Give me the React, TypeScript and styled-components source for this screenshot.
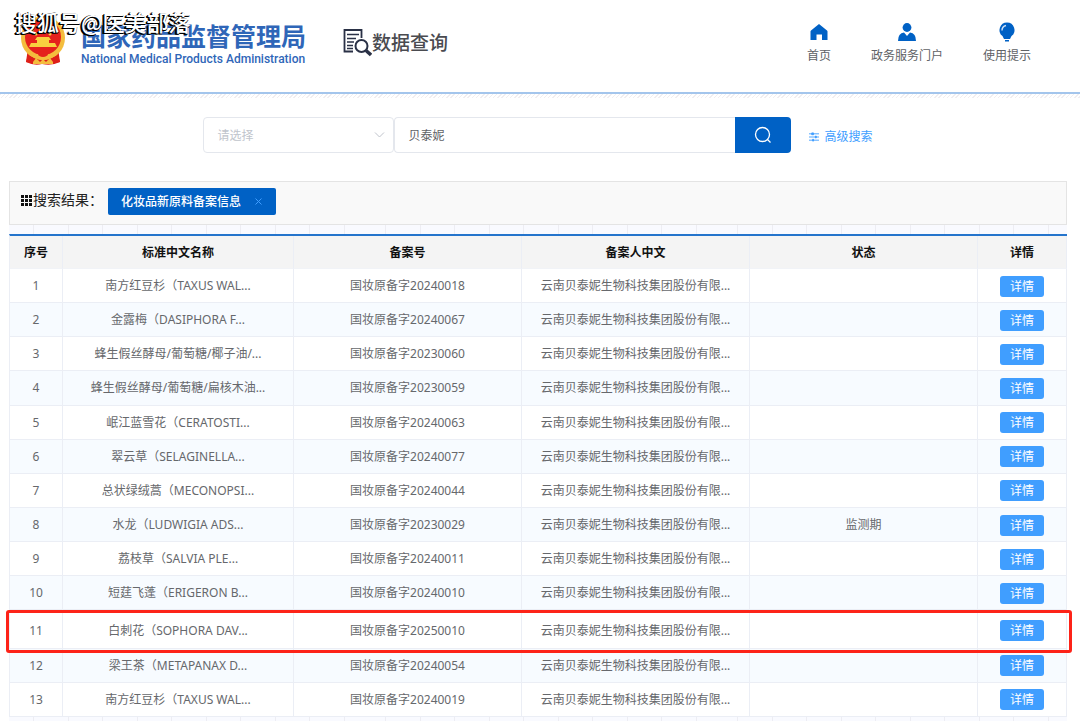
import React from "react";
import styled, { createGlobalStyle } from "styled-components";

const GlobalStyle = createGlobalStyle`
  *, *::before, *::after { box-sizing: border-box; }
  body {
    margin: 0;
    background: #fff;
    color: #66686c;
    font: 12px/18px "Noto Sans", "Noto Sans CJK SC", sans-serif;
  }
  button, input, select { font: inherit; }
`;

const Page = styled.div`
  position: relative;
  overflow-x: hidden;
`;

const Watermark = styled.div`
  position: absolute;
  left: 15px;
  top: 5px;
  z-index: 3;
  color: #fff;
  font: 500 22px/32px "Noto Sans CJK SC", sans-serif;
  white-space: nowrap;
  pointer-events: none;
  text-shadow: -1px 0 0 #000, -1px 1px 0 #000, 0 1px 0 #000, -2px 1px 0 #000;
`;

const Header = styled.header`
  display: flex;
  align-items: flex-start;
  height: 94px;
  padding: 0 49px 0 20px;
  border-bottom: 2px solid #a3c5ec;
`;

const Hatch = styled.div`
  height: 4px;
  background: repeating-linear-gradient(135deg, #f0eef1 0 1px, #fff 1px 3px);
`;

const Brand = styled.div`
  display: flex;
  align-items: flex-start;
  gap: 15px;
  padding-top: 15px;
`;

const BrandText = styled.div`
  display: flex;
  flex-direction: column;
  padding-top: 5px;
  color: #2f66b8;
`;

const BrandName = styled.h1`
  margin: 0;
  font: 700 25px/30px "Noto Sans CJK SC", sans-serif;
`;

const BrandEnglish = styled.span`
  font: 500 12px/18px Roboto, sans-serif;
  white-space: nowrap;
`;

const SiteTitle = styled.h2`
  display: flex;
  align-items: center;
  margin: 26px 0 0 37px;
  color: #4a4b50;
  font: 500 19px/32px "Noto Sans CJK SC", sans-serif;
  white-space: nowrap;
`;

const Nav = styled.nav`
  display: flex;
  gap: 40px;
  margin-left: auto;
  padding-top: 23px;
`;

const NavLink = styled.a`
  display: flex;
  flex-direction: column;
  align-items: center;
  gap: 6px;
  color: #606266;
  text-decoration: none;
  white-space: nowrap;
  svg { fill: #0061c5; }
`;

const Main = styled.main`
  padding: 19px 13px 0 9px;
`;

const SearchForm = styled.form`
  display: flex;
  align-items: center;
  justify-content: center;
`;

const SelectBox = styled.div`
  position: relative;
  width: 191px;
  svg {
    position: absolute;
    right: 9px;
    top: 12px;
    pointer-events: none;
  }
`;

const CategorySelect = styled.select`
  appearance: none;
  display: block;
  width: 100%;
  height: 36px;
  padding: 1px 28px 0 13px;
  border: 1px solid #e4e7ed;
  border-radius: 4px;
  background: #fff;
  color: #c0c4cc;
`;

const Keyword = styled.input`
  width: 341px;
  height: 36px;
  padding: 0 13px;
  border: 1px solid #e4e7ed;
  border-right: 0;
  border-radius: 4px 0 0 4px;
  background: #fff;
  color: #606266;
`;

const SearchButton = styled.button`
  display: flex;
  align-items: center;
  justify-content: center;
  width: 56px;
  height: 36px;
  padding: 0;
  border: 0;
  border-radius: 0 4px 4px 0;
  background: #0061c5;
`;

const AdvancedLink = styled.a`
  display: flex;
  align-items: center;
  gap: 5px;
  margin-left: 18px;
  padding-top: 3px;
  color: #409eff;
  text-decoration: none;
`;

const ResultBar = styled.section`
  display: flex;
  align-items: flex-start;
  height: 44px;
  margin-top: 28px;
  padding: 6px 10px;
  border: 1px solid #e4e4e4;
  background: #f9f9f9;
`;

const ResultLabel = styled.span`
  display: flex;
  align-items: center;
  gap: 1px;
  width: 88px;
  height: 24px;
  padding-left: 1px;
  color: #222;
  font-size: 14px;
  white-space: nowrap;
`;

const Tag = styled.span`
  display: flex;
  align-items: center;
  gap: 12px;
  height: 27px;
  padding: 0 12px 0 13px;
  border-radius: 2px;
  background: #0061c5;
  color: #fff;
  font-weight: 500;
`;

const TagClose = styled.button`
  display: flex;
  padding: 2px;
  border: 0;
  background: none;
`;

const TableArea = styled.div`
  padding: 9px 0 4px;
  background-color: #f9faff;
  background-image: repeating-linear-gradient(90deg, transparent 0 9.5%, #ededf3 9.5% 9.8%);
  background-size: 352px 100%;
  background-position: -9px 0;
`;

const Table = styled.table`
  width: 100%;
  height: 483px;
  table-layout: fixed;
  border-collapse: separate;
  border-spacing: 0;
  border-top: 2px solid #2474cc;
  border-left: 1px solid #ebeef5;
  background: #fff;
  text-align: center;
`;

const Col = styled.col<{ $share: number }>`
  width: ${(p) => (p.$share / 1057) * 100}%;
`;

const HeadCell = styled.th`
  height: 33px;
  padding: 2px 10px 0;
  border-right: 1px solid #ebeef5;
  border-bottom: 1px solid #f1f3f7;
  background: #f4f4f4;
  color: #111;
  font-weight: 700;
`;

const Row = styled.tr<{ $marked: boolean }>`
  position: relative;
  height: ${(p) => (p.$marked ? 38 : 34)}px;
  background: #fff;
  &:nth-child(even) { background: #f7fbff; }
  td { padding-top: ${(p) => (p.$marked ? 4 : 1)}px; }
`;

const Cell = styled.td`
  padding: 0 10px;
  border-right: 1px solid #ebeef5;
  border-bottom: 1px solid #ebeef5;
  white-space: nowrap;
`;

const Marker = styled.div`
  position: absolute;
  z-index: 2;
  inset: 0 -5px -4px -4px;
  border: 3px solid #fd2318;
  border-radius: 3px;
  pointer-events: none;
`;

const DetailButton = styled.button`
  display: block;
  width: 44px;
  height: 21px;
  margin: 0 auto;
  padding: 0;
  border: 0;
  border-radius: 3px;
  background: #409eff;
  color: #fff;
  line-height: 21px;
`;

const Emblem = () => (
  <svg width="46" height="51" viewBox="0 0 46 51" aria-hidden="true">
    <path d="M8 33 L6 47 Q14 51 22 49 Q32 51 40 47 L38 33Z" fill="#de2019" />
    <circle cx="23" cy="23" r="22" fill="#f4bd3d" />
    <circle cx="23" cy="22" r="18" fill="#e5211d" />
    <path d="M23 5l2 5h5l-4 3 2 5-5-3-5 3 2-5-4-3h5z" fill="#f8d03f" />
    <g fill="#f8d03f">
      <circle cx="12" cy="15" r="1.500" />
      <circle cx="34" cy="15" r="1.500" />
      <circle cx="16" cy="19" r="1.500" />
      <circle cx="30" cy="19" r="1.500" />
      <path d="M17 22h12l2 3h-2v3h6l2 4H9l2-4h6v-3h-2z" />
    </g>
    <path d="M6 34q11 9 17 3 6 6 17-3l-3 6q-8 5-14 5T9 40z" fill="#f4bd3d" />
    <path d="M8 40l7 4-3 4-6-1zM38 40l-7 4 3 4 6-1z" fill="#de2019" />
    <ellipse cx="23" cy="39" rx="5" ry="3" fill="#e5211d" />
    <path d="M13 47l3-4 4 4 3-3 3 3 4-4 3 4v2H13z" fill="#f4bd3d" />
  </svg>
);

const QueryIcon = () => (
  <svg width="29" height="29" viewBox="0 0 29 29" fill="none" stroke="#2a3146" aria-hidden="true">
    <path d="M10 23.500H1.500V2H18.500V10" strokeWidth="1.800" />
    <path d="M4 6.500h12M4 10.500h9M4 14h7M4 17.500h6M4 20.500h6" strokeWidth="1.300" />
    <circle cx="18.500" cy="18" r="6" strokeWidth="2" />
    <path d="M23 22.500l5 4.500" strokeWidth="3.500" />
  </svg>
);

const HomeIcon = () => (
  <svg width="18" height="18" viewBox="0 0 18 18" aria-hidden="true">
    <path d="M9 1l8 6.500q.5.500.5 1V17h-5.500v-5.500H6.500V17H.5V8.500q0-.5.5-1z" />
  </svg>
);

const UserIcon = () => (
  <svg width="18" height="18" viewBox="0 0 18 18" aria-hidden="true">
    <circle cx="9" cy="4.500" r="4.400" />
    <path d="M0 18q0-8 6-8.500l3 3.500 3-3.500q6 .5 6 8.500z" />
  </svg>
);

const BulbIcon = () => (
  <svg width="18" height="18" viewBox="0 0 18 18" overflow="visible" aria-hidden="true">
    <path d="M9-.5a7.500 7.500 0 0 1 4.500 13.500L12 16H6l-1.500-3A7.500 7.500 0 0 1 9-.5zM7 17h4v1.500H7z" />
    <path d="M4 7.500q0-4 4-5" style={{ fill: "none" }} stroke="#cfe2f8" strokeWidth="1.400" />
  </svg>
);

const ChevronIcon = () => (
  <svg width="11" height="12" viewBox="0 0 11 12" fill="none" stroke="#c0c4cc" aria-hidden="true">
    <path d="M1 3.500l4.500 4.500L10 3.500" />
  </svg>
);

const SearchIcon = () => (
  <svg width="18" height="18" viewBox="0 0 18 18" fill="none" stroke="#fff" strokeWidth="1.300" aria-hidden="true">
    <circle cx="8.500" cy="8.500" r="7" />
    <path d="M13.500 13.500l3 3" />
  </svg>
);

const SlidersIcon = () => (
  <svg width="10" height="10" viewBox="0 0 11 10" stroke="#409eff" fill="#409eff" aria-hidden="true">
    <path d="M0 1.500h11M0 5h11M0 8.500h11" />
    <path d="M3 .5h2v2H3zM7 4h1v2H7zM4 7.500h1v2H4z" />
  </svg>
);

const GridIcon = () => (
  <svg width="11" height="11" viewBox="0 0 11 11" fill="#111" aria-hidden="true">
    <path d="M0 0h3v3H0zM4 0h3v3H4zM8 0h3v3H8zM0 4h3v3H0zM4 4h3v3H4zM8 4h3v3H8zM0 8h3v3H0zM4 8h3v3H4zM8 8h3v3H8z" />
  </svg>
);

const CloseIcon = () => (
  <svg width="7" height="7" viewBox="0 0 7 7" stroke="#409eff" aria-hidden="true">
    <path d="M.5.5l6 6M6.500.5l-6 6" />
  </svg>
);

type Filing = { name: string; code: string; status?: string; marked?: boolean };

const filings: Filing[] = [
  { name: "南方红豆杉（TAXUS WAL...", code: "20240018" },
  { name: "金露梅（DASIPHORA F...", code: "20240067" },
  { name: "蜂生假丝酵母/葡萄糖/椰子油/...", code: "20230060" },
  { name: "蜂生假丝酵母/葡萄糖/扁核木油...", code: "20230059" },
  { name: "岷江蓝雪花（CERATOSTI...", code: "20240063" },
  { name: "翠云草（SELAGINELLA...", code: "20240077" },
  { name: "总状绿绒蒿（MECONOPSI...", code: "20240044" },
  { name: "水龙（LUDWIGIA ADS...", code: "20230029", status: "监测期" },
  { name: "荔枝草（SALVIA PLE...", code: "20240011" },
  { name: "短莛飞蓬（ERIGERON B...", code: "20240010" },
  { name: "白刺花（SOPHORA DAV...", code: "20250010", marked: true },
  { name: "梁王茶（METAPANAX D...", code: "20240054" },
  { name: "南方红豆杉（TAXUS WAL...", code: "20240019" },
];

const columns = [
  { title: "序号", share: 53 },
  { title: "标准中文名称", share: 231 },
  { title: "备案号", share: 228 },
  { title: "备案人中文", share: 228 },
  { title: "状态", share: 228 },
  { title: "详情", share: 89 },
];

export default function App() {
  return (
    <Page lang="zh-CN">
      <GlobalStyle />
      <Watermark>搜狐号@医美部落</Watermark>
      <Header>
        <Brand>
          <Emblem />
          <BrandText>
            <BrandName>国家药品监督管理局</BrandName>
            <BrandEnglish>National Medical Products Administration</BrandEnglish>
          </BrandText>
        </Brand>
        <SiteTitle>
          <QueryIcon />
          数据查询
        </SiteTitle>
        <Nav>
          <NavLink href="#home"><HomeIcon />首页</NavLink>
          <NavLink href="#portal"><UserIcon />政务服务门户</NavLink>
          <NavLink href="#tips"><BulbIcon />使用提示</NavLink>
        </Nav>
      </Header>
      <Hatch />
      <Main>
        <SearchForm onSubmit={(e) => e.preventDefault()}>
          <SelectBox>
            <CategorySelect aria-label="请选择" defaultValue="">
              <option value="">请选择</option>
            </CategorySelect>
            <ChevronIcon />
          </SelectBox>
          <Keyword type="text" aria-label="搜索" defaultValue="贝泰妮" />
          <SearchButton type="submit" aria-label="搜索"><SearchIcon /></SearchButton>
          <AdvancedLink href="#advanced"><SlidersIcon />高级搜索</AdvancedLink>
        </SearchForm>
        <ResultBar>
          <ResultLabel><GridIcon />搜索结果：</ResultLabel>
          <Tag>
            化妆品新原料备案信息
            <TagClose type="button" aria-label="关闭"><CloseIcon /></TagClose>
          </Tag>
        </ResultBar>
        <TableArea>
          <Table>
            <colgroup>
              {columns.map((c) => <Col key={c.title} $share={c.share} />)}
            </colgroup>
            <thead>
              <tr>
                {columns.map((c) => <HeadCell key={c.title} scope="col">{c.title}</HeadCell>)}
              </tr>
            </thead>
            <tbody>
              {filings.map((f, i) => (
                <Row key={f.code} $marked={!!f.marked}>
                  <Cell>{f.marked && <Marker />}{i + 1}</Cell>
                  <Cell>{f.name}</Cell>
                  <Cell>国妆原备字{f.code}</Cell>
                  <Cell>云南贝泰妮生物科技集团股份有限...</Cell>
                  <Cell>{f.status}</Cell>
                  <Cell><DetailButton type="button">详情</DetailButton></Cell>
                </Row>
              ))}
            </tbody>
          </Table>
        </TableArea>
      </Main>
    </Page>
  );
}
